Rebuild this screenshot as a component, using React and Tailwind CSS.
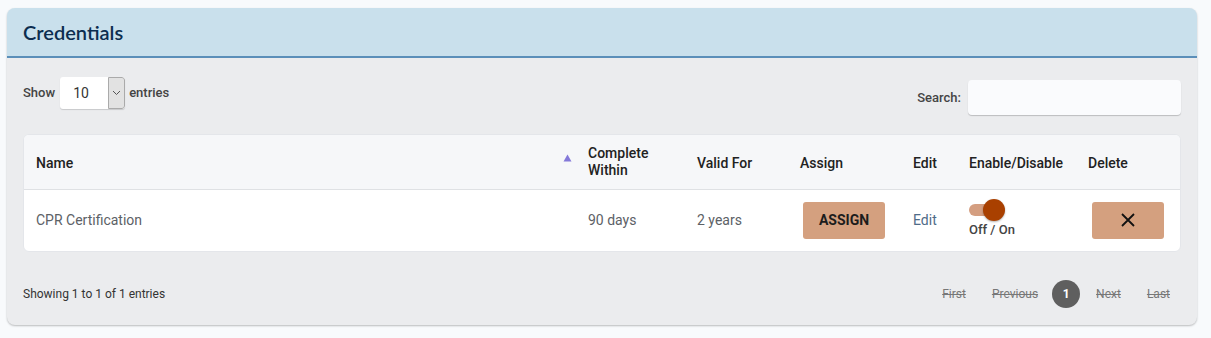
export default function App() {
  return (
    <div className="min-h-[338px] bg-[#f8fafc] pt-2 pl-[7px] pr-[14px]" style={{ fontFamily: "Roboto, 'Liberation Sans', sans-serif" }}>
      <div className="w-[1190px] rounded-[8px] bg-[#ebecee] shadow-[0_1px_2px_rgba(0,0,0,0.25)] overflow-hidden">
        <div className="h-[50px] bg-[#c9e0ec] border-b-2 border-[#5b8fb9] flex items-center pl-4">
          <h1 className="text-[20px] font-semibold text-[#0c2d4f] tracking-[0px]" style={{ fontFamily: "Lato, 'Open Sans', sans-serif" }}>Credentials</h1>
        </div>
        <div className="px-4 pt-[18px] pb-[17px]">
          <div className="flex justify-between items-start">
            <div className="flex items-center gap-[4px] text-[13px] font-medium text-[#444] pt-[1px]">
              <span>Show</span>
              <div className="flex h-[32px] w-[65px] rounded-[3px] bg-white shadow-[0_1px_1px_rgba(0,0,0,0.15)] overflow-hidden ml-[1px]">
                <div className="flex-1 flex items-center pl-[13px] text-[14px] font-normal text-[#333]">10</div>
                <div className="w-[17px] bg-[#e2e2e2] border border-[#aaa] rounded-r-[3px] flex items-center justify-center">
                  <svg width="9" height="6" viewBox="0 0 9 6"><path d="M1 1 L4.5 4.5 L8 1" stroke="#555" strokeWidth="1" fill="none" /></svg>
                </div>
              </div>
              <span>entries</span>
            </div>
            <div className="flex items-center gap-[7px] mt-[4px] text-[13px] font-medium text-[#444]">
              <span>Search:</span>
              <div className="w-[213px] h-[35px] rounded-[4px] bg-[#fafbfd] shadow-[0_1px_1px_rgba(0,0,0,0.2)]"></div>
            </div>
          </div>

          <div className="mt-[19px] bg-white rounded-[6px] border border-[#e4e6ea] overflow-hidden">
            <table className="w-full border-collapse table-fixed">
              <colgroup>
                <col className="w-[552px]" />
                <col className="w-[109px]" />
                <col className="w-[103px]" />
                <col className="w-[113px]" />
                <col className="w-[56px]" />
                <col className="w-[119px]" />
                <col />
              </colgroup>
              <thead>
                <tr className="h-[54px] bg-[#f6f7f9] border-b border-[#dfe1e4] text-left text-[14px] font-medium text-[#222]">
                  <th className="relative font-medium pl-[12px] pt-[3px]">
                    Name
                    <svg className="absolute right-[4px] top-[19px]" width="9" height="8" viewBox="0 0 9 8"><path d="M4.5 0.5 L8.5 7.5 L0.5 7.5 Z" fill="#8479d9" /></svg>
                  </th>
                  <th className="font-medium pl-[12px] leading-[17px] pt-[1px]">Complete<br />Within</th>
                  <th className="font-medium pl-[12px] pt-[3px]">Valid For</th>
                  <th className="font-medium pl-[12px] pt-[3px]">Assign</th>
                  <th className="font-medium pl-[12px] pt-[3px]">Edit</th>
                  <th className="font-medium pl-[12px] pt-[3px]">Enable/Disable</th>
                  <th className="font-medium pl-[12px] pt-[3px]">Delete</th>
                </tr>
              </thead>
              <tbody>
                <tr className="h-[62px] text-[14px] text-[#5c6166]">
                  <td className="pl-[12px] pt-[1px]">CPR Certification</td>
                  <td className="pl-[12px] pt-[1px]">90 days</td>
                  <td className="pl-[12px] pt-[1px]">2 years</td>
                  <td className="pl-[15px]">
                    <div className="w-[82px] h-[37px] rounded-[3px] bg-[#d4a07f] flex items-center justify-center text-[14px] font-bold text-[#1c1c1c]">ASSIGN</div>
                  </td>
                  <td className="pl-[12px] pt-[1px] text-[#4f6b88]">Edit</td>
                  <td className="pl-[12px]">
                    <div className="flex flex-col items-start">
                      <div className="relative w-[32px] h-[12px] mt-[2px]">
                        <div className="absolute inset-0 rounded-full bg-[#d49e80]"></div>
                        <div className="absolute right-[-4px] top-[-5px] w-[22px] h-[22px] rounded-full bg-[#a94000] shadow-[0_1px_2px_rgba(0,0,0,0.3)]"></div>
                      </div>
                      <span className="mt-[4px] text-[13px] font-medium text-[#444]">Off / On</span>
                    </div>
                  </td>
                  <td className="pl-[16px]">
                    <div className="w-[72px] h-[37px] rounded-[3px] bg-[#d4a07f] flex items-center justify-center">
                      <svg width="14" height="14" viewBox="0 0 14 14"><path d="M1 1 L13 13 M13 1 L1 13" stroke="#111" strokeWidth="1.8" /></svg>
                    </div>
                  </td>
                </tr>
              </tbody>
            </table>
          </div>

          <div className="mt-[28px] flex justify-between items-center">
            <span className="text-[12px] text-[#333]">Showing 1 to 1 of 1 entries</span>
            <div className="flex items-center text-[12px] text-[#777] mr-[11px]">
              <span className="line-through">First</span>
              <span className="line-through ml-[26px]">Previous</span>
              <span className="ml-[14px] w-[28px] h-[28px] rounded-full bg-[#5f5f5f] text-white font-bold flex items-center justify-center">1</span>
              <span className="line-through ml-[16px]">Next</span>
              <span className="line-through ml-[26px]">Last</span>
            </div>
          </div>
        </div>
      </div>
    </div>
  );
}
